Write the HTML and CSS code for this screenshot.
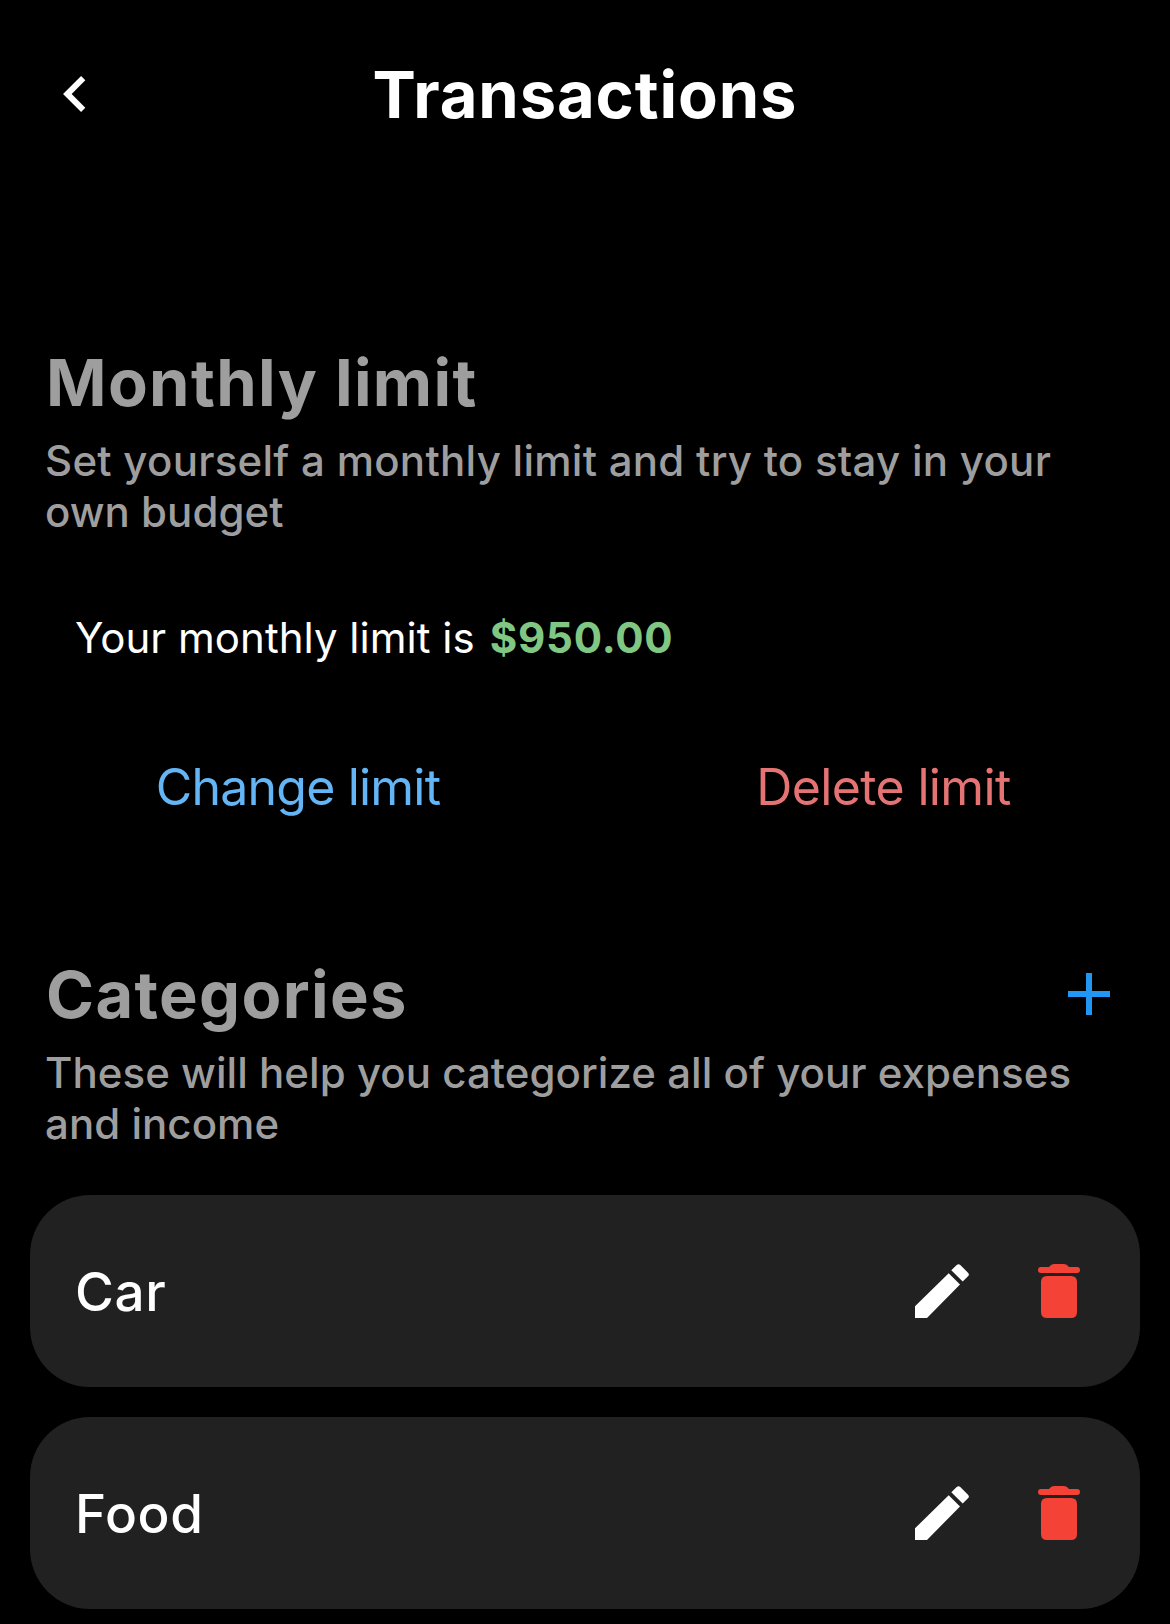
FILE: index.html
```html
<!DOCTYPE html>
<html lang="en">
<head>
<meta charset="utf-8">
<title>Transactions</title>
<link rel="stylesheet" href="styles.css">
</head>
<body>
<header class="topbar">
  <button class="back" aria-label="Back"><svg width="28" height="40" viewBox="0 0 28 40"><path d="M25.200 4.200 9.300 20 25.200 35.800" fill="none" stroke="#fff" stroke-width="6"/></svg></button>
  <h1>Transactions</h1>
</header>
<main>
  <section class="limit">
    <h2>Monthly limit</h2>
    <p class="desc"><span class="line-wide">Set yourself a monthly limit and try to stay in your</span><br>own budget</p>
    <p class="current"><span>Your monthly limit is</span><strong>$950.00</strong></p>
    <div class="actions"><button class="change">Change limit</button><button class="delete">Delete limit</button></div>
  </section>
  <section class="categories">
    <div class="heading"><h2>Categories</h2><button class="add" aria-label="Add category"><svg width="42" height="42" viewBox="0 0 42 42"><path d="M0 21H42M21 0V42" stroke="#2196f3" stroke-width="6"/></svg></button></div>
    <p class="desc">These will help you categorize all of your expenses<br>and income</p>
    <ul>
      <li><span class="name">Car</span>
        <svg class="edit" viewBox="0 0 54 54"><path fill="#fff" d="M0 42.300V54H12L45 20.400 33.700 9.200ZM36.300 6.300 47.700 17.600 53 12.300Q54.800 10.500 53 8.700L45.300 1Q43.500-.7 41.700 1Z"/></svg>
        <svg class="trash" viewBox="0 0 42 54"><path fill="#f44336" d="M9 12H33Q39 12 39 18V48Q39 54 33 54H9Q3 54 3 48V18Q3 12 9 12ZM3 3H11Q13 0 16 0H26Q29 0 31 3H39A3 3 0 0 1 39 9H3A3 3 0 0 1 3 3Z"/></svg></li>
      <li><span class="name">Food</span>
        <svg class="edit" viewBox="0 0 54 54"><path fill="#fff" d="M0 42.300V54H12L45 20.400 33.700 9.200ZM36.300 6.300 47.700 17.600 53 12.300Q54.800 10.500 53 8.700L45.300 1Q43.500-.7 41.700 1Z"/></svg>
        <svg class="trash" viewBox="0 0 42 54"><path fill="#f44336" d="M9 12H33Q39 12 39 18V48Q39 54 33 54H9Q3 54 3 48V18Q3 12 9 12ZM3 3H11Q13 0 16 0H26Q29 0 31 3H39A3 3 0 0 1 39 9H3A3 3 0 0 1 3 3Z"/></svg></li>
    </ul>
  </section>
</main>
</body>
</html>
```
FILE: styles.css
```css
* { box-sizing: border-box; margin: 0; padding: 0; }
body { background: #000; color: #fff; font-family: Inter, sans-serif; height: 1624px; overflow: hidden; }
button { background: none; border: 0; font: inherit; color: inherit; }
svg { display: block; }
.topbar { display: grid; grid-template-columns: 120px 1fr 120px; align-items: center; height: 188px; }
.back { padding-left: 58px; }
h1 { padding-top: 2px; text-align: center; font-size: 65px; font-weight: 700; line-height: 80px; letter-spacing: .9px; }
.limit { padding: 154px 46px 0; height: 766px; }
h2 { padding-top: 1px; color: #9e9e9e; font-size: 65px; font-weight: 700; line-height: 80px; letter-spacing: 1.35px; white-space: nowrap; }
.desc { color: #9e9e9e; font-size: 42px; font-weight: 500; line-height: 51px; letter-spacing: .04px; margin: 12px 0 0 -1px; white-space: nowrap; }
.line-wide { letter-spacing: .27px; }
.current { display: flex; gap: 15px; padding-left: 29px; margin-top: 75px; font-size: 42px; line-height: 51px; letter-spacing: .02px; white-space: nowrap; }
.current strong { color: #81c784; font-weight: 700; letter-spacing: .8px; }
.actions { display: grid; grid-template-columns: 1fr 1fr; margin: 94px -46px 0; font-size: 50px; line-height: 60px; }
.change { color: #64b5f6; letter-spacing: -.8px; padding-left: 11px; }
.delete { color: #e57373; letter-spacing: -.65px; padding-left: 12px; }
.heading { display: flex; justify-content: space-between; align-items: flex-start; padding: 0 60px 0 46px; }
.add { margin-top: 19px; }
.categories .desc { padding-left: 46px; }
ul { list-style: none; padding: 0 30px; margin-top: 46px; display: grid; gap: 30px; }
li { height: 192px; border-radius: 60px; background: #212121; display: flex; align-items: center; padding: 0 60px 0 45px; }
.name { flex: 1; font-size: 53px; font-weight: 500; line-height: 64px; letter-spacing: .6px; padding-top: 2px; }
.edit { width: 54px; height: 54px; margin-right: 69px; }
.trash { width: 42px; height: 54px; }
```
